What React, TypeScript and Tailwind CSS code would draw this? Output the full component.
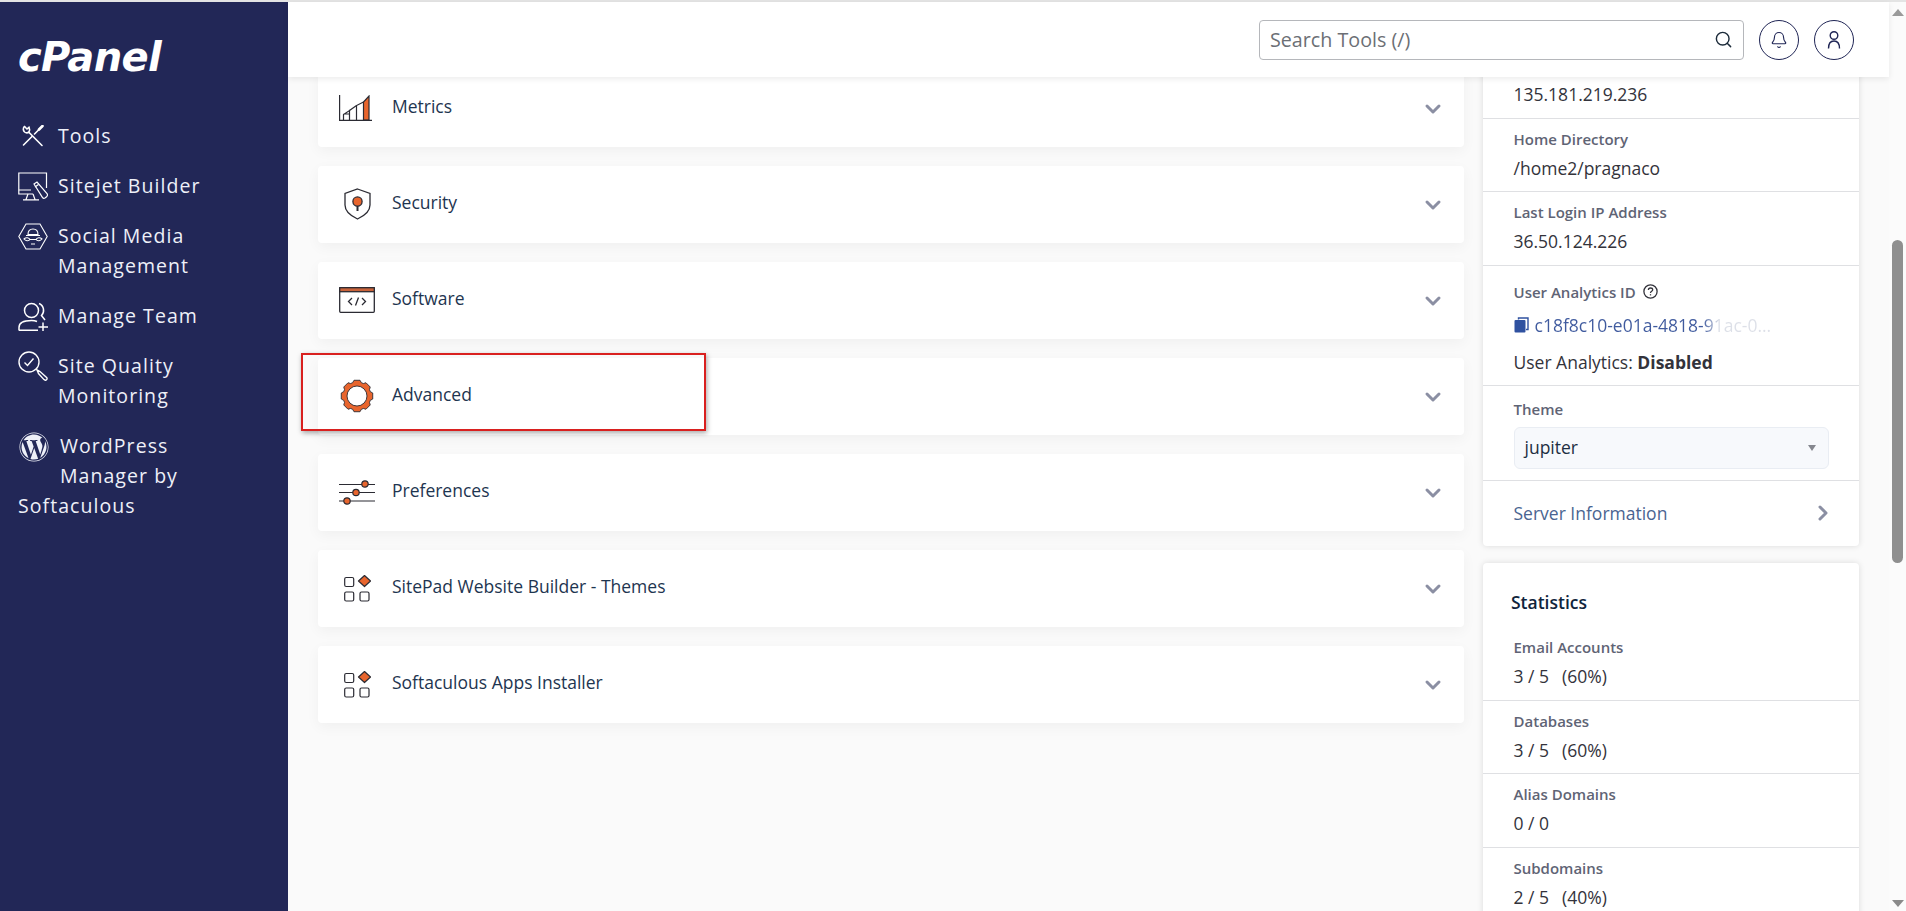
import type { ReactNode } from "react";
import { Bell, ChevronDown, ChevronRight, Search } from "lucide-react";
import { FaWordpress } from "react-icons/fa";

const ORANGE = "#e8652d";
const INK = "#2b2b33";

function gearPath() {
  const points: string[] = [];
  const teeth = 8;
  for (let i = 0; i < teeth; i++) {
    const base = (i / teeth) * Math.PI * 2 - Math.PI / 2;
    const step = (Math.PI * 2) / teeth;
    const offsets: [number, number][] = [
      [-0.4, 14],
      [-0.24, 16],
      [0.24, 16],
      [0.4, 14],
    ];
    offsets.forEach(([o, r]) => {
      const a = base + o * step;
      points.push(`${(17 + r * Math.cos(a)).toFixed(2)} ${(17 + r * Math.sin(a)).toFixed(2)}`);
    });
  }
  return `M${points.join(" L")} Z`;
}

function MetricsIcon() {
  return (
    <svg width="33" height="26" viewBox="0 0 33 26" fill="none" stroke={INK} strokeWidth="1.2" className="mr-[3px]">
      <path d="M24.5 25V7L30 1V25Z" fill={ORANGE} />
      <path d="M0.6 0V25.3H33" />
      <path d="M4.5 25V19.5L10.5 15.5V25M10.5 19H4.5" />
      <path d="M17.5 25V10.5L24.5 7M10.5 15.5L17.5 10.5" />
    </svg>
  );
}

function SecurityIcon() {
  return (
    <svg width="27" height="32" viewBox="0 0 27 32" fill="none" stroke={INK} strokeWidth="1.3">
      <path d="M13.5 1L26 5.5V17C26 24 20 28 13.5 31C7 28 1 24 1 17V5.5Z" />
      <path d="M13.5 18V23" strokeWidth="2" />
      <circle cx="13.5" cy="13.5" r="4.6" fill={ORANGE} />
    </svg>
  );
}

function SoftwareIcon() {
  return (
    <svg width="36" height="26" viewBox="0 0 36 26" fill="none" stroke={INK} strokeWidth="1.3">
      <rect x="0.7" y="0.7" width="34.6" height="24.6" rx="1" fill="#fff" />
      <rect x="0.7" y="0.7" width="34.6" height="4" fill="#c9633a" />
      <path d="M13 11L9.5 14.5L13 18M23 11L26.5 14.5L23 18M19.5 10.5L16.5 18.5" />
    </svg>
  );
}

function GearIcon() {
  return (
    <svg width="34" height="34" viewBox="0 0 34 34" fill="none" stroke={INK} strokeWidth="0.9" strokeLinejoin="round">
      <path d={gearPath()} fill={ORANGE} />
      <circle cx="17" cy="17" r="10" fill="#fff" />
    </svg>
  );
}

function PrefsIcon() {
  return (
    <svg width="36" height="25" viewBox="0 0 36 25" fill="none" stroke={INK} strokeWidth="1.2">
      <path d="M0 4.5H36M0 12.5H36M0 21H36" />
      <circle cx="26" cy="4" r="3.2" fill={ORANGE} />
      <circle cx="17" cy="12.5" r="3.2" fill={ORANGE} />
      <circle cx="8" cy="21" r="3.2" fill={ORANGE} />
    </svg>
  );
}

function AppsIcon() {
  return (
    <svg width="27" height="27" viewBox="0 0 27 27" fill="none" stroke={INK} strokeWidth="1.2">
      <rect x="0.7" y="2.5" width="9" height="9" rx="1.5" />
      <rect x="0.7" y="17" width="9" height="9" rx="1.5" />
      <rect x="16" y="17" width="9" height="9" rx="1.5" />
      <path d="M20.5 0.5L26.5 6L20.5 11.5L14.5 6Z" fill={ORANGE} strokeLinejoin="round" />
    </svg>
  );
}

function ToolsIcon() {
  return (
    <svg width="22" height="22" viewBox="0 0 22 22" fill="none" stroke="#fff" strokeWidth="1.6" strokeLinecap="round">
      <path d="M1.5 20L10 11.5M12.5 9L18 3.5" />
      <path d="M17 4.5L20.5 1" strokeWidth="2.6" />
      <path d="M2.5 1.5C0.8 3.2 1 5.6 2.6 7C3.8 8 5.4 8.1 6.8 7.3L20 20.5" />
      <path d="M2.5 1.5L5 4L7 2.2C7.8 3.8 7.6 5.8 6.8 7.3" />
    </svg>
  );
}

function SitejetIcon() {
  return (
    <svg width="30" height="29" viewBox="0 0 30 29" fill="none" stroke="#fff" strokeWidth="1.2">
      <path d="M28.5 16V1H0.8V22H15" />
      <path d="M0.8 18H13M10 22L8 27.5M15 22L17 27.5M5 27.8H21" />
      <path d="M16 12L19 10L29 21.5C29.6 22.5 29.4 24 28.6 24.8L27 26C26 26.6 25 26.2 24.4 25.4Z" />
      <path d="M17 15L20.5 12.5" />
    </svg>
  );
}

function SocialIcon() {
  return (
    <svg width="30" height="27" viewBox="0 0 30 27" fill="none" stroke="#fff" strokeWidth="1.1">
      <path d="M8 1H22L29.2 13.5L22 26H8L0.8 13.5Z" />
      <path d="M10 11.5C10 7.5 12 6 15 6C18 6 20 7.5 20 11.5ZM8 12.5H22" />
      <path d="M6 16C8 14 11 14.5 12 16.5C10.5 18.5 7.5 18 6 16ZM24 16C22 14 19 14.5 18 16.5C19.5 18.5 22.5 18 24 16Z" />
      <path d="M12 16.5H18M13 21H17" />
    </svg>
  );
}

function TeamIcon() {
  return (
    <svg width="30" height="29" viewBox="0 0 30 29" fill="none" stroke="#fff" strokeWidth="1.5">
      <circle cx="13.5" cy="8.5" r="7" />
      <path d="M21 1.5C26 3.5 27 10 23.5 13.5L27 18" />
      <path d="M1 28.5V25.5C1 21 6 18.5 13.5 18.5C15.5 18.5 17.5 18.8 19 19.5" />
      <path d="M1 28.3H20M25 20.5V29M20.5 25H30" />
    </svg>
  );
}

function QualityIcon() {
  return (
    <svg width="30" height="30" viewBox="0 0 30 30" fill="none" stroke="#fff" strokeWidth="1.4">
      <circle cx="11" cy="11" r="10" />
      <path d="M6.5 11.5L9.5 14.5L15.5 7.5" />
      <path d="M19 19L22 20.5L28.6 26.5C29.4 27.4 29.2 28.2 28.5 28.8C27.8 29.4 26.8 29.4 26 28.6L20.5 22.5Z" />
    </svg>
  );
}

function UserIcon() {
  return (
    <svg width="18" height="20" viewBox="0 0 18 20" fill="none" stroke="#1f2555" strokeWidth="1.4">
      <circle cx="9" cy="5.5" r="3.8" />
      <path d="M3.5 18.5C3.5 13.5 5.5 11 9 11C12.5 11 14.5 13.5 14.5 18.5" />
    </svg>
  );
}

function CopyIcon() {
  return (
    <svg width="15" height="16" viewBox="0 0 15 16" fill="none">
      <path d="M4.5 2.5V1H14V12.5H12" stroke="#2f51a0" strokeWidth="1.4" />
      <rect x="0.5" y="3" width="11" height="12.5" rx="1" fill="#2f51a0" />
    </svg>
  );
}

function HelpIcon() {
  return (
    <svg width="15" height="15" viewBox="0 0 15 15" fill="none" stroke="#33333b" strokeWidth="1.3">
      <circle cx="7.5" cy="7.5" r="6.6" />
      <path d="M5.4 6C5.4 4.7 6.3 4 7.5 4C8.8 4 9.7 4.8 9.7 5.8C9.7 7.3 7.5 7.2 7.5 9" />
      <path d="M7.5 10.2V11.4" />
    </svg>
  );
}

function SideItem({ icon, children }: { icon: ReactNode; children: ReactNode }) {
  return (
    <a className="flex items-start gap-[10px]">
      <span className="flex h-[30px] w-[30px] shrink-0 items-center justify-center">{icon}</span>
      <span>{children}</span>
    </a>
  );
}

function Sidebar() {
  return (
    <aside className="w-[288px] shrink-0 bg-[#222757] pl-[18px] pr-[30px] text-[19.5px] leading-[30px] tracking-[1.05px] text-[#eef0f8]">
      <div className="pb-[42px] pt-[33px]">
        <span className="block font-['DejaVu_Sans',sans-serif] text-[40px] font-bold italic leading-[44px] tracking-[-0.6px] text-white">cPanel</span>
      </div>
      <nav className="flex flex-col gap-[20px]">
        <SideItem icon={<ToolsIcon />}>Tools</SideItem>
        <SideItem icon={<SitejetIcon />}>Sitejet Builder</SideItem>
        <SideItem icon={<SocialIcon />}>Social Media Management</SideItem>
        <SideItem icon={<TeamIcon />}>Manage Team</SideItem>
        <SideItem icon={<QualityIcon />}>Site Quality Monitoring</SideItem>
        <a className="block w-[195px]">
          <span className="float-left mr-[11px] flex h-[60px] w-[31px] justify-center pl-px">
            <FaWordpress size={30} className="mt-px" />
          </span>
          WordPress Manager by Softaculous
        </a>
      </nav>
    </aside>
  );
}

function Header() {
  return (
    <header className="relative z-10 flex h-[75px] shrink-0 items-center justify-end gap-[15px] bg-white pr-[35px] shadow-[0_2px_6px_rgba(0,0,0,0.08)]">
      <div className="flex h-10 w-[485px] items-center justify-between rounded border border-[#b5b7bb] pl-[10px] pr-[10px]">
        <span className="text-[19.7px] text-[#6c6f75]">Search Tools (/)</span>
        <Search size={19} strokeWidth={1.8} className="text-[#1c2b3a]" />
      </div>
      <button type="button" className="flex h-10 w-10 items-center justify-center rounded-full border border-[#1f2555] text-[#1f2555]">
        <Bell size={18} strokeWidth={1.5} />
      </button>
      <button type="button" className="flex h-10 w-10 items-center justify-center rounded-full border border-[#1f2555]">
        <UserIcon />
      </button>
    </header>
  );
}

const sections = [
  { name: "Metrics", icon: <MetricsIcon /> },
  { name: "Security", icon: <SecurityIcon /> },
  { name: "Software", icon: <SoftwareIcon /> },
  { name: "Advanced", icon: <GearIcon />, marked: true },
  { name: "Preferences", icon: <PrefsIcon /> },
  { name: "SitePad Website Builder - Themes", icon: <AppsIcon /> },
  { name: "Softaculous Apps Installer", icon: <AppsIcon /> },
];

function SectionCard({ name, icon, marked }: { name: string; icon: ReactNode; marked?: boolean }) {
  return (
    <div className="relative flex h-[77px] items-center rounded bg-white pl-[20px] pr-[19px] shadow-[0_4px_14px_rgba(0,0,0,0.045)]">
      <span className="flex w-[38px] shrink-0 justify-center pb-[1px]">{icon}</span>
      <span className="ml-[16px] flex-1 pb-[5px] text-[17.5px] text-[#1e3550]">{name}</span>
      <ChevronDown size={24} strokeWidth={3} className="text-[#8b8fa3]" />
      {marked ? (
        <div className="absolute -left-[17px] -top-[5px] h-[78px] w-[405px] border-2 border-[#d9201f] shadow-[1px_2px_5px_rgba(0,0,0,0.35)]" />
      ) : null}
    </div>
  );
}

function StatRow({ label, children }: { label: string; children: ReactNode }) {
  return (
    <div className="border-b border-[#dfe0e3] pb-[11.5px] pl-[30.5px] pt-[10px]">
      <div className="text-[15px] font-semibold leading-5 text-[#5f6475]">{label}</div>
      <div className="mt-[7px] text-[17.5px] leading-6 text-[#33333b]">{children}</div>
    </div>
  );
}

function Usage({ used, pct }: { used: string; pct?: string }) {
  return (
    <>
      {used}
      {pct ? <span className="ml-[13px]">{pct}</span> : null}
    </>
  );
}

function AccountPanel() {
  return (
    <section className="-mt-[20px] rounded bg-white shadow-[0_0_6px_rgba(0,0,0,0.13)]">
      <div className="border-b border-[#dfe0e3] pb-[11.5px] pl-[30.5px] pt-[25px] text-[17.5px] leading-6 text-[#33333b]">135.181.219.236</div>
      <StatRow label="Home Directory">/home2/pragnaco</StatRow>
      <StatRow label="Last Login IP Address">36.50.124.226</StatRow>
      <div className="h-[120px] border-b border-[#dfe0e3] pl-[30.5px] pt-[16px]">
        <div className="flex items-center gap-[7px] text-[15px] font-semibold leading-5 text-[#5f6475]">
          User Analytics ID
          <HelpIcon />
        </div>
        <div className="mt-[11px] flex items-center gap-[6px] text-[17.5px] leading-6">
          <CopyIcon />
          <span className="bg-[linear-gradient(90deg,#3f5a9e_71%,#dde0e8_78%)] bg-clip-text text-transparent">c18f8c10-e01a-4818-91ac-0...</span>
        </div>
        <div className="mt-[13px] text-[17.5px] leading-6 text-[#33333b]">
          User Analytics: <b className="font-bold">Disabled</b>
        </div>
      </div>
      <div className="h-[95px] border-b border-[#dfe0e3] pl-[30.5px] pr-[30px] pt-[13px]">
        <div className="text-[15px] font-semibold leading-5 text-[#5f6475]">Theme</div>
        <div className="mt-[8px] flex h-[42px] items-center justify-between rounded-md border border-[#e9edf3] bg-[#f7f9fc] pl-[10px] pr-[12px]">
          <span className="text-[17.5px] text-[#1e2f42]">jupiter</span>
          <span className="h-0 w-0 border-x-[4px] border-t-[6px] border-x-transparent border-t-[#85878f]" />
        </div>
      </div>
      <div className="flex h-[65px] items-center justify-between pl-[30.5px] pr-[24px]">
        <span className="text-[17.5px] text-[#4a6491]">Server Information</span>
        <ChevronRight size={24} strokeWidth={3} className="text-[#8b8fa3]" />
      </div>
    </section>
  );
}

function StatsPanel() {
  return (
    <section className="mt-[17px] rounded bg-white shadow-[0_0_6px_rgba(0,0,0,0.13)]">
      <h2 className="pb-[13.5px] pl-[28px] pt-[27px] text-[17.5px] font-semibold leading-6 text-[#10243c]">Statistics</h2>
      <StatRow label="Email Accounts"><Usage used="3 / 5" pct="(60%)" /></StatRow>
      <StatRow label="Databases"><Usage used="3 / 5" pct="(60%)" /></StatRow>
      <StatRow label="Alias Domains"><Usage used="0 / 0" /></StatRow>
      <StatRow label="Subdomains"><Usage used="2 / 5" pct="(40%)" /></StatRow>
    </section>
  );
}

function Scrollbar() {
  return (
    <div className="flex w-[17px] shrink-0 flex-col items-center bg-[#fbfbfb]">
      <span className="mt-[7px] h-0 w-0 border-x-[6px] border-b-[7px] border-x-transparent border-b-[#9a9a9a]" />
      <div className="mt-[224px] h-[323px] w-[11px] rounded-[6px] bg-[#8f8f8f]" />
      <div className="flex-1" />
      <span className="mb-[4px] h-0 w-0 border-x-[6px] border-t-[7px] border-x-transparent border-t-[#8a8a8a]" />
    </div>
  );
}

export default function App() {
  return (
    <div className="flex h-screen w-full flex-col overflow-hidden bg-[#fafafa] font-['Open_Sans',sans-serif]">
      <div className="h-[2px] shrink-0 bg-[#e4e4e4]" />
      <div className="flex min-h-0 flex-1">
        <Sidebar />
        <main className="flex min-w-0 flex-1 flex-col">
          <Header />
          <div className="grid min-h-0 flex-1 grid-cols-[1fr_376px] gap-[19px] overflow-hidden px-[30px]">
            <div className="-mt-[7px] flex flex-col gap-[19px]">
              {sections.map((section) => (
                <SectionCard key={section.name} {...section} />
              ))}
            </div>
            <div>
              <AccountPanel />
              <StatsPanel />
            </div>
          </div>
        </main>
        <Scrollbar />
      </div>
    </div>
  );
}
